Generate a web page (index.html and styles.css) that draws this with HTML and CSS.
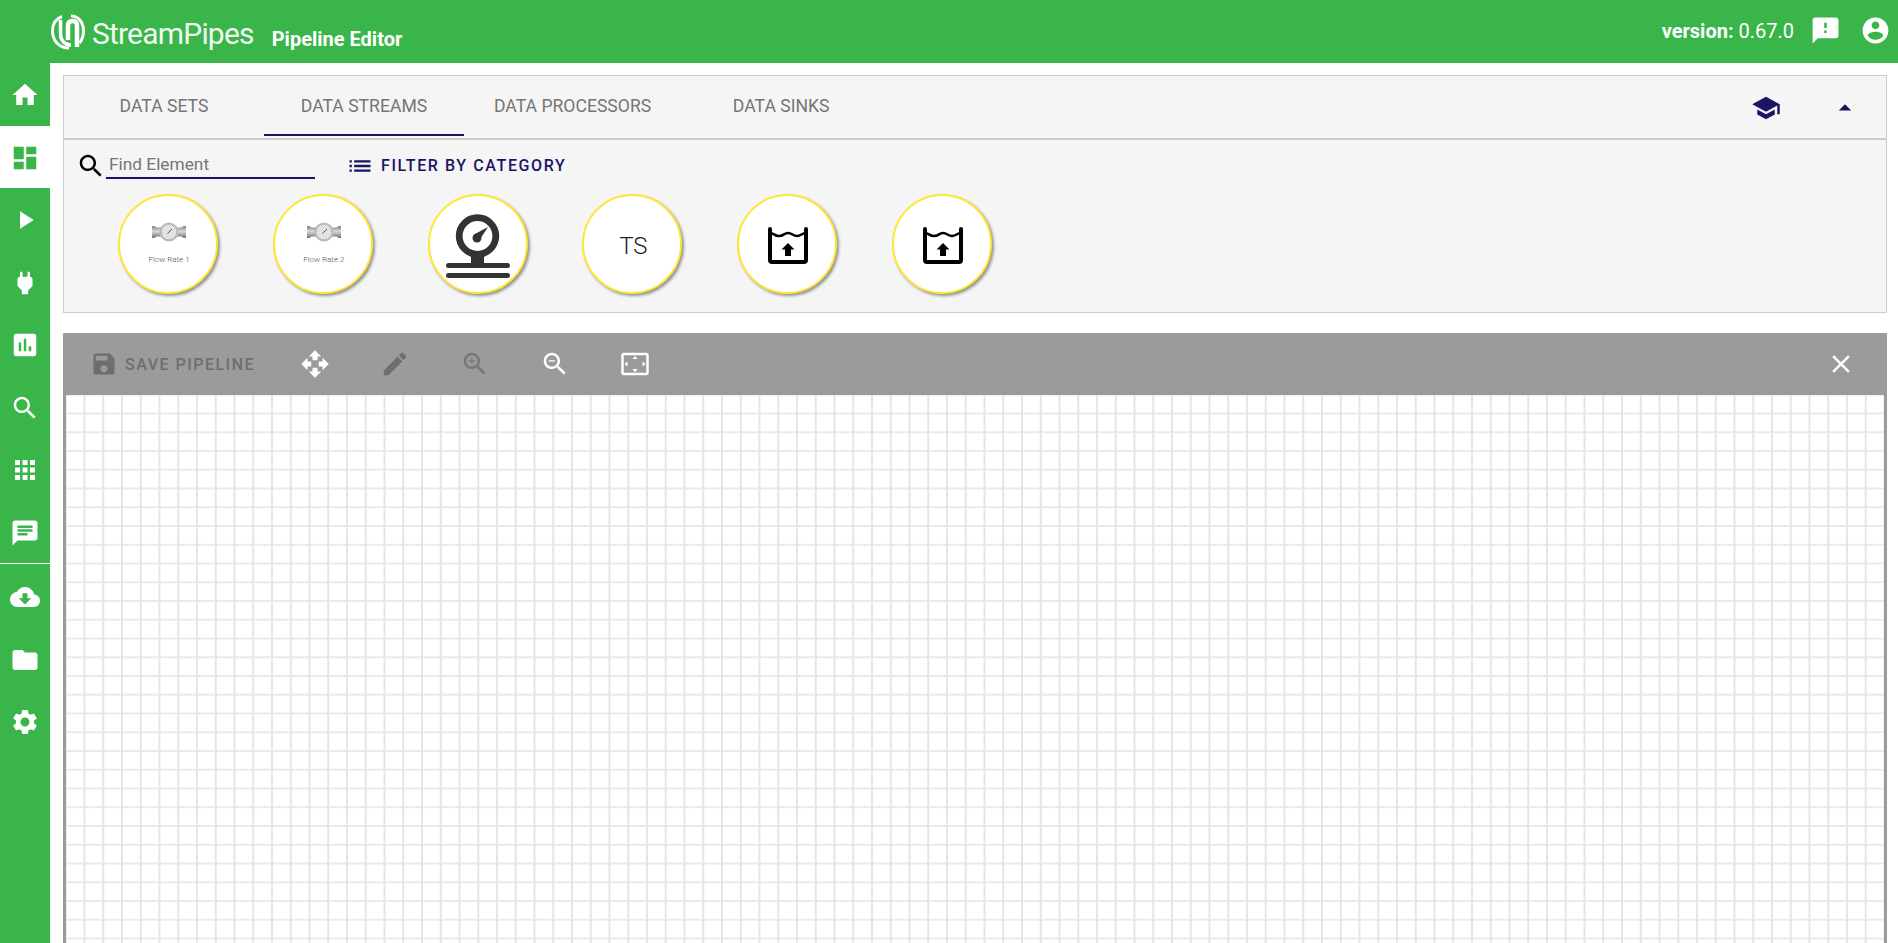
FILE: index.html
```html
<!DOCTYPE html>
<html lang="en">
<head>
    <meta charset="UTF-8">
    <title>StreamPipes - Pipeline Editor</title>
    <link rel="stylesheet" href="styles.css">
</head>
<body>

<!-- Icon set -->
<svg class="icon-defs" width="0" height="0">
    <defs>
        <linearGradient id="flange" x1="0" y1="0" x2="0" y2="1">
            <stop offset="0" stop-color="#808080"/>
            <stop offset=".45" stop-color="#d8d8d8"/>
            <stop offset="1" stop-color="#707070"/>
        </linearGradient>
    </defs>
    <symbol id="i-home" viewBox="0 0 24 24"><path d="M10 20v-6h4v6h5v-8h3L12 3 2 12h3v8z"/></symbol>
    <symbol id="i-dashboard" viewBox="0 0 24 24"><path d="M3 13h8V3H3v10zm0 8h8v-6H3v6zm10 0h8V11h-8v10zm0-18v6h8V3h-8z"/></symbol>
    <symbol id="i-play" viewBox="0 0 24 24"><path d="M8 5v14l11-7z"/></symbol>
    <symbol id="i-power" viewBox="0 0 24 24"><path d="M16.01 7L16 3h-2v4h-4V3H8v4h-.01C7 6.99 6 7.99 6 8.99v5.49L9.5 18v3h5v-3l3.5-3.51v-5.5c0-1-1-2-1.99-2z"/></symbol>
    <symbol id="i-assessment" viewBox="0 0 24 24"><path d="M19 3H5c-1.1 0-2 .9-2 2v14c0 1.1.9 2 2 2h14c1.1 0 2-.9 2-2V5c0-1.1-.9-2-2-2zM9 17H7v-7h2v7zm4 0h-2V7h2v10zm4 0h-2v-4h2v4z"/></symbol>
    <symbol id="i-search" viewBox="0 0 24 24"><path d="M15.5 14h-.79l-.28-.27C15.41 12.59 16 11.11 16 9.5 16 5.91 13.09 3 9.5 3S3 5.91 3 9.5 5.91 16 9.5 16c1.61 0 3.09-.59 4.23-1.57l.27.28v.79l5 4.99L20.49 19l-4.99-5zm-6 0C7.01 14 5 11.99 5 9.5S7.01 5 9.5 5 14 7.01 14 9.5 11.99 14 9.5 14z"/></symbol>
    <symbol id="i-apps" viewBox="0 0 24 24"><path d="M4 8h4V4H4v4zm6 12h4v-4h-4v4zm-6 0h4v-4H4v4zm0-6h4v-4H4v4zm6 0h4v-4h-4v4zm6-10v4h4V4h-4zm-6 4h4V4h-4v4zm6 6h4v-4h-4v4zm0 6h4v-4h-4v4z"/></symbol>
    <symbol id="i-message" viewBox="0 0 24 24"><path d="M20 2H4c-1.1 0-1.99.9-1.99 2L2 22l4-4h14c1.1 0 2-.9 2-2V4c0-1.1-.9-2-2-2zM6 9h12v2H6V9zm8 5H6v-2h8v2zm4-6H6V6h12v2z"/></symbol>
    <symbol id="i-cloud" viewBox="0 0 24 24"><path d="M19.35 10.04C18.67 6.59 15.64 4 12 4 9.11 4 6.6 5.64 5.35 8.04 2.34 8.36 0 10.91 0 14c0 3.31 2.69 6 6 6h13c2.76 0 5-2.24 5-5 0-2.64-2.05-4.78-4.65-4.96zM17 13l-5 5-5-5h3V9h4v4h3z"/></symbol>
    <symbol id="i-folder" viewBox="0 0 24 24"><path d="M10 4H4c-1.1 0-1.99.9-1.99 2L2 18c0 1.1.9 2 2 2h16c1.1 0 2-.9 2-2V8c0-1.1-.9-2-2-2h-8l-2-2z"/></symbol>
    <symbol id="i-settings" viewBox="0 0 24 24"><path d="M19.14 12.94c.04-.3.06-.61.06-.94 0-.32-.02-.64-.07-.94l2.03-1.58c.18-.14.23-.41.12-.61l-1.92-3.32c-.12-.22-.37-.29-.59-.22l-2.39.96c-.5-.38-1.03-.7-1.62-.94l-.36-2.54c-.04-.24-.24-.41-.48-.41h-3.84c-.24 0-.43.17-.47.41l-.36 2.54c-.59.24-1.13.57-1.62.94l-2.39-.96c-.22-.08-.47 0-.59.22L2.74 8.87c-.12.21-.08.47.12.61l2.03 1.58c-.05.3-.09.63-.09.94s.02.64.07.94l-2.03 1.58c-.18.14-.23.41-.12.61l1.92 3.32c.12.22.37.29.59.22l2.39-.96c.5.38 1.03.7 1.62.94l.36 2.54c.05.24.24.41.48.41h3.84c.24 0 .44-.17.47-.41l.36-2.54c.59-.24 1.13-.56 1.62-.94l2.39.96c.22.08.47 0 .59-.22l1.92-3.32c.12-.22.07-.47-.12-.61l-2.01-1.58zM12 15.6c-1.98 0-3.6-1.62-3.6-3.6s1.62-3.6 3.6-3.6 3.6 1.62 3.6 3.6-1.62 3.6-3.6 3.6z"/></symbol>
    <symbol id="i-feedback" viewBox="0 0 24 24"><path d="M20 2H4c-1.1 0-1.99.9-1.99 2L2 22l4-4h14c1.1 0 2-.9 2-2V4c0-1.1-.9-2-2-2zm-7 12h-2v-2h2v2zm0-4h-2V6h2v4z"/></symbol>
    <symbol id="i-account" viewBox="0 0 24 24"><path d="M12 2C6.48 2 2 6.48 2 12s4.48 10 10 10 10-4.48 10-10S17.52 2 12 2zm0 3c1.66 0 3 1.34 3 3s-1.34 3-3 3-3-1.34-3-3 1.34-3 3-3zm0 14.2c-2.5 0-4.71-1.28-6-3.22.03-1.99 4-3.08 6-3.08 1.99 0 5.97 1.09 6 3.08-1.29 1.94-3.5 3.22-6 3.22z"/></symbol>
    <symbol id="i-school" viewBox="0 0 24 24"><path d="M5 13.18v4L12 21l7-3.82v-4L12 17l-7-3.82zM12 3L1 9l11 6 9-4.91V17h2V9L12 3z"/></symbol>
    <symbol id="i-drop-up" viewBox="0 0 24 24"><path d="M7 14l5-5 5 5z"/></symbol>
    <symbol id="i-list" viewBox="0 0 24 24"><path d="M3 13h2v-2H3v2zm0 4h2v-2H3v2zm0-8h2V7H3v2zm4 4h14v-2H7v2zm0 4h14v-2H7v2zM7 7v2h14V7H7z"/></symbol>
    <symbol id="i-save" viewBox="0 0 24 24"><path d="M17 3H5c-1.11 0-2 .9-2 2v14c0 1.1.89 2 2 2h14c1.1 0 2-.9 2-2V7l-4-4zm-5 16c-1.66 0-3-1.34-3-3s1.34-3 3-3 3 1.34 3 3-1.34 3-3 3zm3-10H5V5h10v4z"/></symbol>
    <symbol id="i-move" viewBox="0 0 24 24"><path d="M10 9h4V6h3l-5-5-5 5h3v3zm-1 1H6V7l-5 5 5 5v-3h3v-4zm14 2l-5-5v3h-3v4h3v3l5-5zm-9 3h-4v3H7l5 5 5-5h-3v-3z"/></symbol>
    <symbol id="i-pencil" viewBox="0 0 24 24"><path d="M3 17.25V21h3.75L17.81 9.94l-3.75-3.75L3 17.25zM20.71 7.04c.39-.39.39-1.02 0-1.41l-2.34-2.34c-.39-.39-1.02-.39-1.41 0l-1.83 1.83 3.75 3.75 1.83-1.83z"/></symbol>
    <symbol id="i-zoom-in" viewBox="0 0 24 24"><path d="M15.5 14h-.79l-.28-.27C15.41 12.59 16 11.11 16 9.5 16 5.91 13.09 3 9.5 3S3 5.91 3 9.5 5.91 16 9.5 16c1.61 0 3.09-.59 4.23-1.57l.27.28v.79l5 4.99L20.49 19l-4.99-5zm-6 0C7.01 14 5 11.99 5 9.5S7.01 5 9.5 5 14 7.01 14 9.5 11.99 14 9.5 14z"/><path d="M12 10h-2v2H9v-2H7V9h2V7h1v2h2v1z"/></symbol>
    <symbol id="i-zoom-out" viewBox="0 0 24 24"><path d="M15.5 14h-.79l-.28-.27C15.41 12.59 16 11.11 16 9.5 16 5.91 13.09 3 9.5 3S3 5.91 3 9.5 5.91 16 9.5 16c1.61 0 3.09-.59 4.23-1.57l.27.28v.79l5 4.99L20.49 19l-4.99-5zm-6 0C7.01 14 5 11.99 5 9.5S7.01 5 9.5 5 14 7.01 14 9.5 11.99 14 9.5 14z"/><path d="M7 9h5v1H7z"/></symbol>
    <symbol id="i-fit" viewBox="0 0 24 24"><path d="M12.01 5.5L10 8h4l-1.99-2.5zM18 10v4l2.5-1.99L18 10zM6 10l-2.5 2.01L6 14v-4zm8 6h-4l2.01 2.5L14 16zm7-13H3c-1.1 0-2 .9-2 2v14c0 1.1.9 2 2 2h18c1.1 0 2-.9 2-2V5c0-1.1-.9-2-2-2zm0 16.01H3V4.99h18v14.02z"/></symbol>
    <symbol id="i-close" viewBox="0 0 24 24"><path d="M19 6.41L17.59 5 12 10.59 6.41 5 5 6.41 10.59 12 5 17.59 6.41 19 12 13.41 17.59 19 19 17.59 13.41 12z"/></symbol>
    <symbol id="i-flow" viewBox="0 0 34 20">
        <path d="M0 4h2.500l2 1.500H12v9H4.500l-2 1.500H0z" fill="url(#flange)"/>
        <path d="M34 4h-2.500l-2 1.500H22v9h7.500l2 1.500H34z" fill="url(#flange)"/>
        <circle cx="17" cy="10" r="9.500" fill="#bdbdbd"/>
        <circle cx="17" cy="10" r="7.800" fill="#e2e2e2" stroke="#a8a8a8" stroke-width=".6"/>
        <path d="M15.500 11.500L20 7" stroke="#555" stroke-width="1"/>
    </symbol>
    <symbol id="i-gauge" viewBox="0 0 64 64">
        <circle cx="31.500" cy="22" r="18.300" fill="none" stroke="#333" stroke-width="6.800"/>
        <path d="M25 52V44c0-2-1-3-2-4h17c-1 1-2 2-2 4v8z" fill="#333"/>
        <circle cx="31" cy="24" r="4.500" fill="#333"/>
        <path d="M28 20.500l14-7.500-8.500 13z" fill="#333"/>
        <rect x="0" y="49" width="64" height="5" rx="2.500" fill="#333"/>
        <rect x="0" y="59" width="64" height="5" rx="2.500" fill="#333"/>
    </symbol>
    <symbol id="i-tank" viewBox="0 0 40 37">
        <path d="M2 2v31a2 2 0 0 0 2 2h32a2 2 0 0 0 2-2V2" fill="none" stroke="#000" stroke-width="4" stroke-linecap="round"/>
        <path d="M2 6c4 0 4 3 9 3s5-3 9-3 5 3 9 3 5-3 9-3" fill="none" stroke="#000" stroke-width="2.500"/>
        <path d="M20 16l6.500 6.500h-3.500V29h-6v-6.500h-3.500z" fill="#000"/>
    </symbol>
</svg>

<header class="topbar">
    <div class="brand">
        <svg class="brand-mark" viewBox="0 0 34 36" stroke="#fff">
            <path d="M11 2.500C4 5 1.500 10.500 1.500 17c0 10 7 17 16.500 17" stroke-width="3"/>
            <path d="M9.500 6v14c0 7 5 11 10.500 11" stroke-width="3.500"/>
            <path d="M17 26V12c0-4 2-5 4.500-5s4.500 1 4.500 5v21" stroke-width="4.500"/>
            <path d="M20 2c7.500 0 12.500 6.500 12.500 15 0 5-1.500 9-4 12" stroke-width="3"/>
        </svg>
        <span class="brand-name">StreamPipes</span>
        <span class="page-title">Pipeline Editor</span>
    </div>
    <div class="topbar-right">
        <span class="version"><b>version:</b> 0.67.0</span>
        <svg class="top-icon"><use href="#i-feedback"/></svg>
        <svg class="top-icon"><use href="#i-account"/></svg>
    </div>
</header>

<div class="layout">
    <nav class="sidebar">
        <a class="nav-item"><svg><use href="#i-home"/></svg></a>
        <a class="nav-item active"><svg><use href="#i-dashboard"/></svg></a>
        <a class="nav-item"><svg><use href="#i-play"/></svg></a>
        <a class="nav-item"><svg><use href="#i-power"/></svg></a>
        <a class="nav-item"><svg><use href="#i-assessment"/></svg></a>
        <a class="nav-item"><svg><use href="#i-search"/></svg></a>
        <a class="nav-item"><svg><use href="#i-apps"/></svg></a>
        <a class="nav-item"><svg><use href="#i-message"/></svg></a>
        <div class="nav-divider"></div>
        <a class="nav-item"><svg><use href="#i-cloud"/></svg></a>
        <a class="nav-item"><svg><use href="#i-folder"/></svg></a>
        <a class="nav-item"><svg><use href="#i-settings"/></svg></a>
    </nav>

    <main class="content">
        <section class="panel">
            <div class="tabs">
                <div class="tab">DATA SETS</div>
                <div class="tab selected">DATA STREAMS</div>
                <div class="tab">DATA PROCESSORS</div>
                <div class="tab">DATA SINKS</div>
                <div class="tabs-actions">
                    <svg class="school-icon"><use href="#i-school"/></svg>
                    <svg class="drop-icon"><use href="#i-drop-up"/></svg>
                </div>
            </div>
            <div class="filter-row">
                <svg class="find-icon"><use href="#i-search"/></svg>
                <div class="find-input">Find Element</div>
                <div class="filter-btn">
                    <svg><use href="#i-list"/></svg>
                    <span>FILTER BY CATEGORY</span>
                </div>
            </div>
            <div class="elements">
                <div class="element">
                    <svg class="flow-icon"><use href="#i-flow"/></svg>
                    <span class="flow-label">Flow Rate 1</span>
                </div>
                <div class="element">
                    <svg class="flow-icon"><use href="#i-flow"/></svg>
                    <span class="flow-label">Flow Rate 2</span>
                </div>
                <div class="element"><svg class="gauge-icon"><use href="#i-gauge"/></svg></div>
                <div class="element element-text">TS</div>
                <div class="element"><svg class="tank-icon"><use href="#i-tank"/></svg></div>
                <div class="element"><svg class="tank-icon"><use href="#i-tank"/></svg></div>
            </div>
        </section>

        <section class="editor">
            <div class="toolbar">
                <div class="tool disabled save-tool">
                    <svg><use href="#i-save"/></svg>
                    <span>SAVE PIPELINE</span>
                </div>
                <svg class="tool-icon move"><use href="#i-move"/></svg>
                <svg class="tool-icon pencil disabled"><use href="#i-pencil"/></svg>
                <svg class="tool-icon zoom-in disabled"><use href="#i-zoom-in"/></svg>
                <svg class="tool-icon zoom-out"><use href="#i-zoom-out"/></svg>
                <svg class="tool-icon fit"><use href="#i-fit"/></svg>
                <svg class="tool-icon close"><use href="#i-close"/></svg>
            </div>
            <div class="canvas"></div>
        </section>
    </main>
</div>

</body>
</html>
```

FILE: styles.css
```css
* {
    box-sizing: border-box;
}

html, body {
    height: 100%;
}

body {
    margin: 0;
    font-family: Roboto, Arial, sans-serif;
    background: #fff;
    overflow: hidden;
    display: flex;
    flex-direction: column;
}

svg {
    fill: currentColor;
    display: block;
}

.icon-defs {
    position: absolute;
}

/* Top bar */
.topbar {
    height: 63px;
    flex: none;
    background: #39b54a;
    color: #fff;
    display: flex;
    justify-content: space-between;
    align-items: center;
}

.brand {
    display: flex;
    align-items: center;
    padding-left: 51px;
}

.brand-mark {
    width: 34px;
    height: 36px;
    fill: none;
}

.brand-name {
    font-size: 30px;
    margin-left: 7px;
    margin-top: 3px;
    opacity: .92;
    letter-spacing: -.8px;
}

.page-title {
    font-size: 20px;
    font-weight: 700;
    margin-left: 18px;
    margin-top: 14px;
}

.topbar-right {
    display: flex;
    align-items: center;
    padding-right: 7px;
    margin-top: -2px;
}

.version {
    font-size: 20px;
    margin-right: 16px;
}

.version b {
    font-weight: 700;
}

.top-icon {
    width: 31px;
    height: 31px;
}

.top-icon + .top-icon {
    margin-left: 19px;
}

/* Sidebar */
.layout {
    flex: 1;
    display: flex;
    min-height: 0;
}

.sidebar {
    width: 50px;
    flex: none;
    background: #39b54a;
    color: #fff;
}

.nav-item {
    height: 62.5px;
    display: flex;
    justify-content: center;
    align-items: center;
}

.nav-item svg {
    width: 30px;
    height: 30px;
    margin-top: 2px;
}

.nav-item.active {
    background: #fff;
    color: #39b54a;
}

.nav-divider {
    height: 1px;
    background: #fff;
    margin-bottom: 1px;
}

/* Element panel */
.content {
    flex: 1;
    min-width: 0;
    padding: 12px 11px 0 13px;
    display: flex;
    flex-direction: column;
}

.panel {
    height: 238px;
    flex: none;
    background: #f5f5f5;
    border: 1px solid #ccc;
}

.tabs {
    height: 64px;
    display: flex;
    border-bottom: 2px solid #ccc;
}

.tab {
    min-width: 200px;
    padding: 2px 30px 0;
    height: 60px;
    display: flex;
    justify-content: center;
    align-items: center;
    font-size: 17.6px;
    color: #757575;
    border-bottom: 2px solid transparent;
}

.tab.selected {
    border-bottom-color: #1b1464;
}

.tabs-actions {
    margin-left: auto;
    display: flex;
    align-items: center;
    color: #1b1464;
    padding-right: 26px;
}

.school-icon {
    width: 30px;
    height: 30px;
    margin-right: 49px;
    margin-top: 1px;
}

.drop-icon {
    width: 30px;
    height: 30px;
    margin-top: 2px;
}

.filter-row {
    display: flex;
    align-items: center;
    height: 51px;
    padding-left: 12px;
}

.find-icon {
    width: 30px;
    height: 30px;
    color: #000;
}

.find-input {
    width: 209px;
    height: 24px;
    margin-top: 3px;
    padding-left: 3px;
    font-size: 17.3px;
    color: #757575;
    border-bottom: 2px solid #1b1464;
    line-height: 18px;
}

.filter-btn {
    display: flex;
    align-items: center;
    margin-left: 31px;
    color: #1b1464;
    font-size: 16px;
    font-weight: 500;
    letter-spacing: 1.6px;
}

.filter-btn svg {
    width: 28px;
    height: 28px;
    margin-right: 7px;
}

.elements {
    display: flex;
    gap: 54.8px;
    padding: 3px 0 0 54px;
}

.element {
    width: 100px;
    height: 100px;
    border-radius: 50%;
    background: #fff;
    border: 2px solid #ffe633;
    box-shadow: 2px 2px 3px rgba(0, 0, 0, .4);
    display: flex;
    flex-direction: column;
    align-items: center;
    justify-content: center;
}

.element-text {
    font-size: 24px;
    font-weight: 300;
    color: #222;
    padding: 4px 0 0 2px;
}

.flow-icon {
    width: 34px;
    height: 20px;
    margin: -2px 0 0 2px;
}

.flow-label {
    font-size: 8px;
    font-weight: 300;
    color: #555;
    margin: 13px 0 0 2px;
}

.gauge-icon {
    width: 64px;
    height: 64px;
    margin-top: 3px;
}

.tank-icon {
    width: 40px;
    height: 37px;
    margin: 2px 0 0 2px;
}

/* Editor */
.editor {
    flex: 1;
    margin-top: 20px;
    min-height: 0;
    display: flex;
    flex-direction: column;
}

.toolbar {
    height: 62px;
    flex: none;
    background: #9b9b9b;
    color: #fff;
    display: flex;
    align-items: center;
    padding-left: 27px;
    padding-right: 31px;
}

.disabled {
    color: #6e6e6e;
}

.toolbar .disabled.zoom-in {
    color: #777;
}

.save-tool {
    display: flex;
    align-items: center;
    font-size: 16px;
    font-weight: 500;
    letter-spacing: 1.5px;
    width: 210px;
    flex: none;
}

.save-tool svg {
    width: 28px;
    height: 28px;
    margin-right: 7px;
}

.tool-icon {
    width: 30px;
    height: 30px;
}

.move {
    margin-right: 50px;
}

.pencil {
    margin-right: 50px;
}

.zoom-in {
    margin-right: 50px;
}

.zoom-out {
    margin-right: 50px;
}

.close {
    margin-left: auto;
}

.canvas {
    flex: 1;
    border-left: 3px solid #9b9b9b;
    border-right: 3px solid #9b9b9b;
    background-color: #fff;
    background-image:
        linear-gradient(to right, #ececec 0, #dedede 1px, #ececec 2px, transparent 2px),
        linear-gradient(to bottom, #f0f0f0 0, #e4e4e4 1px, #f0f0f0 2px, transparent 2px);
    background-size: 18.75px 18.75px;
    background-position: 17.5px 17.5px;
}
```
